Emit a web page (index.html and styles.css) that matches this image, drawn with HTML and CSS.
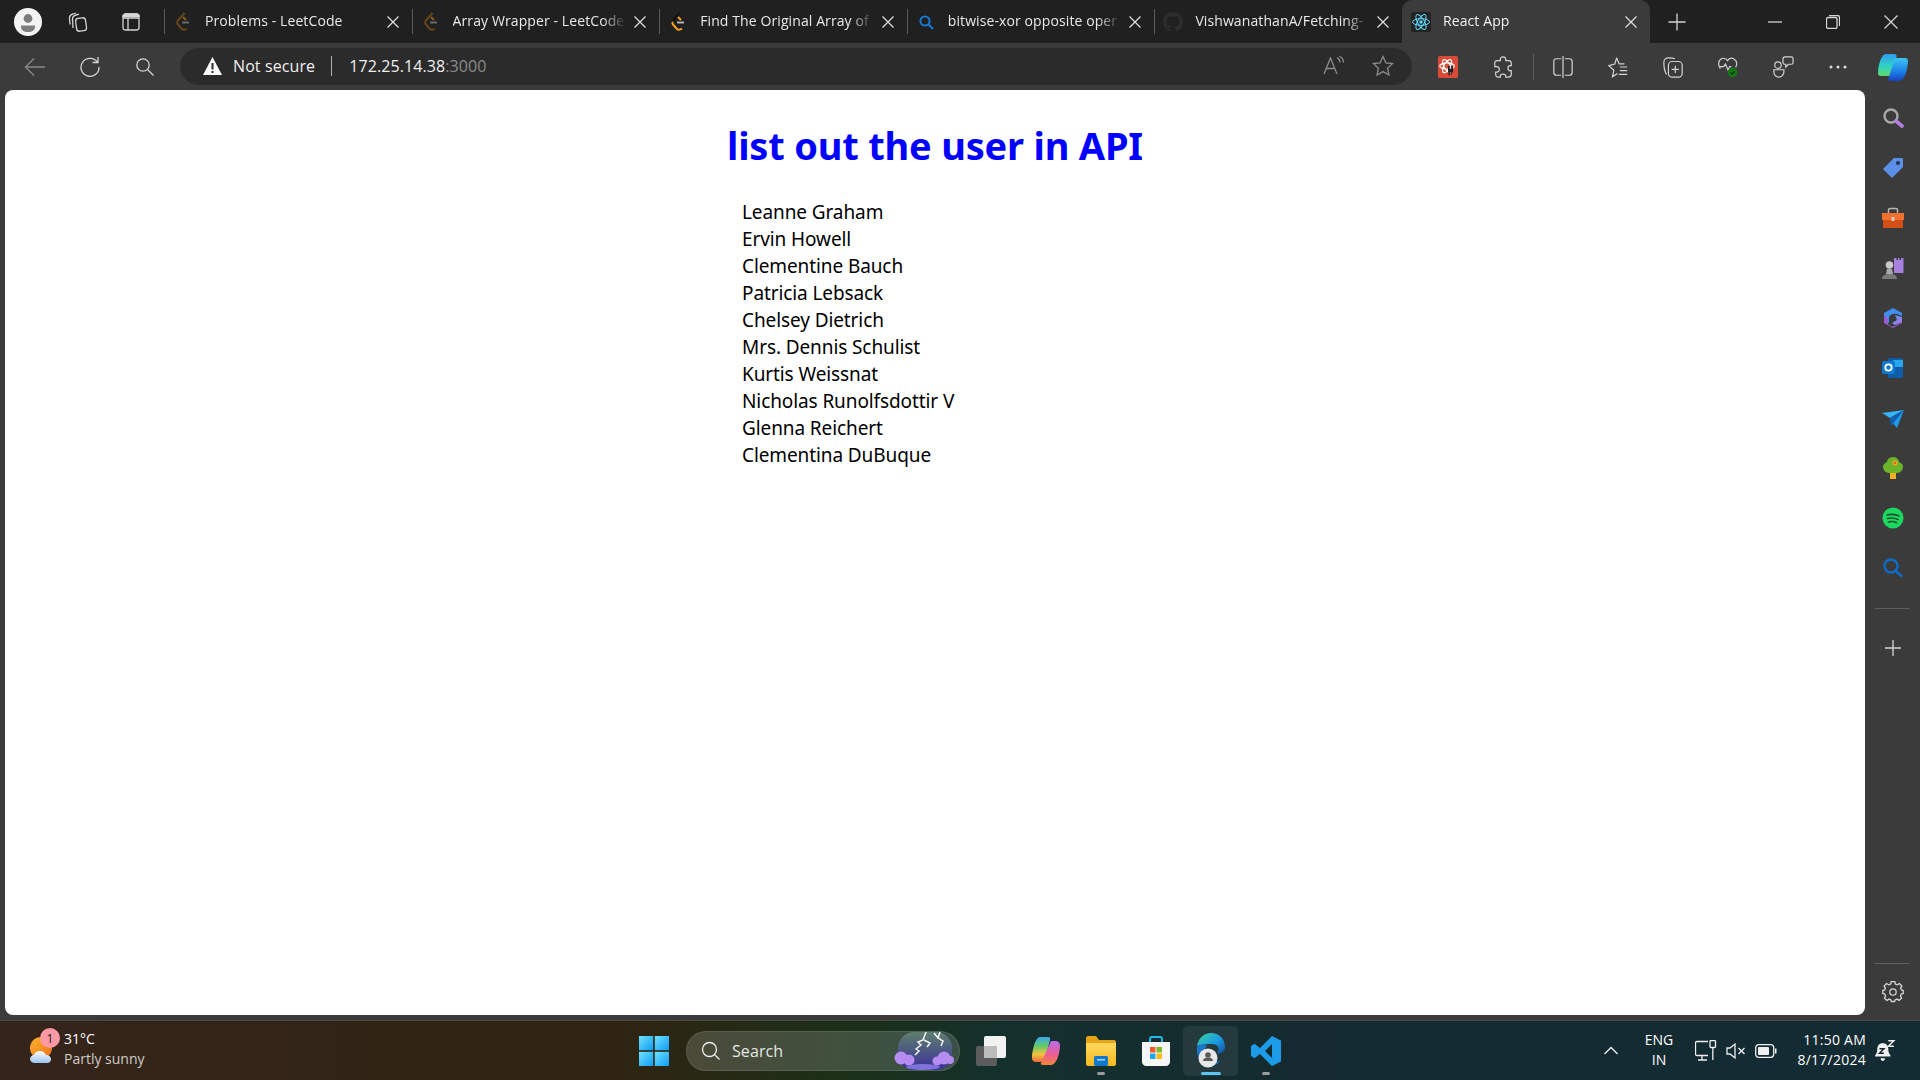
FILE: index.html
```html
<!DOCTYPE html>
<html lang="en">
<head>
    <meta charset="UTF-8">
    <title>React App</title>
    <link rel="stylesheet" href="styles.css">
</head>
<body>
<div class="window">
    <svg class="defs" width="0" height="0">
        <defs>
            <linearGradient id="copilotA" x1="0" y1="0" x2="0" y2="1"><stop offset="0" stop-color="#2f9bf0"/><stop offset=".55" stop-color="#2ed3c4"/><stop offset="1" stop-color="#5fd66a"/></linearGradient>
            <linearGradient id="copilotB" x1="0" y1="0" x2="0" y2="1"><stop offset="0" stop-color="#3cc4f5"/><stop offset=".6" stop-color="#1d7fe6"/><stop offset="1" stop-color="#1a3fc4"/></linearGradient>
            <linearGradient id="copilotC" x1="0" y1="0" x2="0" y2="1"><stop offset="0" stop-color="#3fa5f0"/><stop offset=".35" stop-color="#5ecb6b"/><stop offset=".7" stop-color="#f2c23c"/><stop offset="1" stop-color="#ee6a3c"/></linearGradient>
            <linearGradient id="copilotD" x1="0" y1="0" x2="0" y2="1"><stop offset="0" stop-color="#b56bea"/><stop offset=".6" stop-color="#ef5f8f"/><stop offset="1" stop-color="#f08838"/></linearGradient>
            <linearGradient id="winBlue" x1="0" y1="0" x2="1" y2="1"><stop offset="0" stop-color="#6fe2ff"/><stop offset="1" stop-color="#0f9cf5"/></linearGradient>
            <linearGradient id="edgeGrad" x1="0" y1="0" x2="1" y2="1"><stop offset="0" stop-color="#3bd0a0"/><stop offset=".55" stop-color="#1b9de2"/><stop offset="1" stop-color="#134a9c"/></linearGradient>
            <linearGradient id="sunGrad" x1="0" y1="0" x2="1" y2="1"><stop offset="0" stop-color="#fbb62c"/><stop offset="1" stop-color="#ef6c1c"/></linearGradient>
            <linearGradient id="cloudGrad" x1="0" y1="0" x2="0" y2="1"><stop offset="0" stop-color="#ffffff"/><stop offset="1" stop-color="#9cc4f2"/></linearGradient>
            <linearGradient id="stormGrad" x1="0" y1="0" x2="0" y2="1"><stop offset="0" stop-color="#5d7f6c"/><stop offset="1" stop-color="#3a2f9c"/></linearGradient>
            <linearGradient id="folderGrad" x1="0" y1="0" x2="0" y2="1"><stop offset="0" stop-color="#ffd75e"/><stop offset="1" stop-color="#f5b921"/></linearGradient>
            <linearGradient id="sideCopilot" x1="0" y1="0" x2="1" y2="1"><stop offset="0" stop-color="#3f8ff0"/><stop offset="1" stop-color="#c07ae8"/></linearGradient>
        </defs>
    </svg>

    <header class="tabstrip">
        <span class="avatar-slot">
            <svg class="icon-28" viewBox="0 0 28 28"><circle cx="14" cy="14" r="14" fill="#f4f4f4"/><circle cx="14" cy="10.5" r="4.4" fill="#7d7d7d"/><path d="M7 17.5h14v1.5c0 3-3 5-7 5s-7-2-7-5z" fill="#7d7d7d"/></svg>
        </span>
        <span class="strip-btn">
            <svg class="icon-20 line" viewBox="0 0 20 20"><rect x="8" y="6" width="10" height="13" rx="3" transform="rotate(-8 13 12)"/><path d="M5 16 4.500 7c0-2 1.500-3.500 3.500-4l3-.8M2 12.500 1.500 6C1.500 4 3 2.500 5 2l3-1"/></svg>
        </span>
        <span class="strip-btn strip-btn-gap">
            <svg class="icon-20 line" viewBox="0 0 20 20"><rect x="2" y="2" width="16" height="16" rx="2.500"/><path d="M2 6h16M7 6v12"/><path d="M2 4.500h16v-1l-2-1.500H4L2 3.500z" fill="#d8d8d8"/></svg>
        </span>

        <div class="tabs">
            <div class="tab tab-dim">
                <svg class="favicon" viewBox="0 0 16 20"><path d="M9.500 1 3 8.500c-1.200 1.500-1.200 2.500 0 4l3.500 4c1.500 1.500 3.500 1.500 5.500 0" class="lc-a"/><path d="M8 5l3 3" class="lc-b"/><path d="M7 10.500h7" class="lc-c"/></svg>
                <span class="tab-title">Problems - LeetCode</span>
                <svg class="tab-close" viewBox="0 0 12 12"><path d="M.5.500l11 11M11.500.500l-11 11"/></svg>
            </div>
            <div class="tab tab-dim">
                <svg class="favicon" viewBox="0 0 16 20"><path d="M9.500 1 3 8.500c-1.200 1.500-1.200 2.500 0 4l3.500 4c1.500 1.500 3.500 1.500 5.500 0" class="lc-a"/><path d="M8 5l3 3" class="lc-b"/><path d="M7 10.500h7" class="lc-c"/></svg>
                <span class="tab-title">Array Wrapper - LeetCode</span>
                <svg class="tab-close" viewBox="0 0 12 12"><path d="M.5.500l11 11M11.500.500l-11 11"/></svg>
            </div>
            <div class="tab">
                <svg class="favicon" viewBox="0 0 16 20"><path d="M9.500 1 3 8.500" stroke="#111" stroke-width="2" fill="none"/><path d="M3 10c-1 1-.5 2 0 2.500l3.500 4c1.500 1.500 3.500 1.500 5.500 0" class="lc-a lc-orange"/><path d="M8 5l3 3" class="lc-b"/><path d="M7 10.500h7" class="lc-c"/></svg>
                <span class="tab-title">Find The Original Array of</span>
                <svg class="tab-close" viewBox="0 0 12 12"><path d="M.5.500l11 11M11.500.500l-11 11"/></svg>
            </div>
            <div class="tab">
                <svg class="favicon" viewBox="0 0 16 16"><circle cx="7" cy="7" r="4.600" fill="none" stroke="#1478d4" stroke-width="2"/><path d="M10.500 10.500 15 15" stroke="#1478d4" stroke-width="2"/></svg>
                <span class="tab-title">bitwise-xor opposite oper</span>
                <svg class="tab-close" viewBox="0 0 12 12"><path d="M.5.500l11 11M11.500.500l-11 11"/></svg>
            </div>
            <div class="tab">
                <svg class="favicon favicon-gh" viewBox="0 0 16 16"><path fill="#2e2e2e" d="M8 0C3.580 0 0 3.580 0 8c0 3.540 2.290 6.530 5.470 7.590.4.070.55-.17.55-.38 0-.19-.01-.82-.01-1.490-2.010.37-2.530-.49-2.690-.94-.09-.23-.48-.94-.82-1.130-.28-.15-.68-.52-.01-.53.63-.01 1.080.58 1.230.82.72 1.210 1.870.87 2.330.66.070-.52.28-.87.51-1.070-1.780-.2-3.640-.89-3.640-3.950 0-.87.31-1.590.82-2.150-.08-.2-.36-1.020.08-2.120 0 0 .67-.21 2.200.82.64-.18 1.320-.27 2-.27.68 0 1.360.09 2 .27 1.530-1.040 2.200-.82 2.200-.82.44 1.100.16 1.920.08 2.120.51.56.82 1.270.82 2.150 0 3.070-1.870 3.750-3.650 3.950.29.25.54.73.54 1.480 0 1.070-.01 1.930-.01 2.200 0 .21.15.46.55.38A8.010 8.010 0 0 0 16 8c0-4.420-3.580-8-8-8z"/></svg>
                <span class="tab-title">VishwanathanA/Fetching-</span>
                <svg class="tab-close" viewBox="0 0 12 12"><path d="M.5.500l11 11M11.500.500l-11 11"/></svg>
            </div>
            <div class="tab tab-active">
                <svg class="favicon favicon-react" viewBox="0 0 20 20"><rect width="20" height="20" rx="2" fill="#232323"/><g fill="none" stroke="#61dafb" stroke-width="1"><ellipse cx="10" cy="10" rx="8.500" ry="3.300"/><ellipse cx="10" cy="10" rx="8.500" ry="3.300" transform="rotate(60 10 10)"/><ellipse cx="10" cy="10" rx="8.500" ry="3.300" transform="rotate(120 10 10)"/></g><circle cx="10" cy="10" r="1.700" fill="#61dafb"/></svg>
                <span class="tab-title">React App</span>
                <svg class="tab-close" viewBox="0 0 12 12"><path d="M.5.500l11 11M11.500.500l-11 11"/></svg>
            </div>
        </div>

        <span class="new-tab">
            <svg class="icon-20 line" viewBox="0 0 20 20"><path d="M10 1.500v17M1.500 10h17"/></svg>
        </span>

        <div class="win-controls">
            <span class="win-btn"><svg class="icon-14 line" viewBox="0 0 14 14"><path d="M0 7h14"/></svg></span>
            <span class="win-btn"><svg class="icon-14 line" viewBox="0 0 14 14"><rect x=".5" y="2.500" width="10.500" height="11" rx="1.500"/><path d="M3 .5h8.500c1 0 2 1 2 2V11"/></svg></span>
            <span class="win-btn"><svg class="icon-14 line" viewBox="0 0 14 14"><path d="M.5.500l13 13M13.500.500l-13 13"/></svg></span>
        </div>
    </header>

    <nav class="toolbar">
        <span class="tool tool-off"><svg class="icon-22 line" viewBox="0 0 22 22"><path d="M21 11H1.500M10 2.500 1.500 11l8.500 8.500"/></svg></span>
        <span class="tool tool-reload"><svg class="icon-22 line" viewBox="0 0 22 22"><path d="M18.600 6.500A9 9 0 1 0 20 11M19 1v5.500h-5.500"/></svg></span>
        <span class="tool"><svg class="icon-20 line" viewBox="0 0 20 20"><circle cx="8" cy="8" r="6.200"/><path d="m12.500 12.500 6 6"/></svg></span>

        <div class="address">
            <svg class="warn" viewBox="0 0 20 20"><path d="M10 1 19.500 19H.5z" fill="#fff"/><path d="M9 7h2v6.500H9zM9 15h2v2H9z" fill="#2b2b2b"/></svg>
            <span class="not-secure">Not secure</span>
            <span class="addr-sep"></span>
            <span class="url">172.25.14.38<span class="port">:3000</span></span>
            <div class="addr-tools">
                <span class="addr-tool"><svg class="icon-22 line line-dim" viewBox="0 0 22 22"><path d="M1 19 7.500 3 14 19M3.500 13.500h8"/><path d="M14 2.500c2 1.200 3 2.700 3 5M16.500 1c2.500 1.500 4 3.500 4 6.500"/></svg></span>
                <span class="addr-tool"><svg class="icon-22 line line-dim" viewBox="0 0 22 22"><path d="m11 1.500 2.900 6.300 6.600.8-4.900 4.600 1.300 6.800L11 16.600 5.100 20l1.300-6.800-4.900-4.600 6.600-.8z"/></svg></span>
            </div>
        </div>

        <span class="tool">
            <svg class="icon-22" viewBox="0 0 22 24"><rect width="22" height="24" rx="2" fill="#d84b38"/><g fill="none" stroke="#fff" stroke-width="1.300"><ellipse cx="10" cy="11" rx="8" ry="3.400"/><ellipse cx="10" cy="11" rx="8" ry="3.400" transform="rotate(60 10 11)"/><ellipse cx="10" cy="11" rx="8" ry="3.400" transform="rotate(120 10 11)"/></g><path d="M11 11h2v3h1.500v-3h2v7h-1.500v3H14v-3h-1v3h-1.500v-3H11z" fill="#222"/></svg>
        </span>
        <span class="tool">
            <svg class="icon-22 line" viewBox="0 0 22 24"><path d="M8 4c0-4 6-4 6 0v1h3c2 0 3 1 3 3v2.500h-1c-3.500 0-3.500 5.500 0 5.500h1V20c0 2-1 3-3 3h-3v-1c0-3-6-3-6 0v1H6c-2 0-3-1-3-3v-2.500h1c2.500 0 3-1.500 3-3s-1-3-3-3H2V8c0-2 1-3 3-3h3z"/></svg>
        </span>
        <span class="tool-sep"></span>
        <span class="tool">
            <svg class="icon-22 line" viewBox="0 0 22 24"><path d="M11 0v24M9 3H4C2 3 1 4 1 6v12c0 2 1 3 3 3h5M13 3h5c2 0 3 1 3 3v12c0 2-1 3-3 3h-5"/></svg>
        </span>
        <span class="tool">
            <svg class="icon-22 line" viewBox="0 0 22 24"><path d="m9.500 2 2.700 6.500H18M10.500 19l-5.500 3.500 1.500-7L1 10.500l6.500-1.800L9.500 2M13 12h8M13 16h8M12 20h9"/></svg>
        </span>
        <span class="tool">
            <svg class="icon-22 line" viewBox="0 0 22 24"><path d="M4 20C2 17 1 12 1 7c0-3 2-5 5-5 2 0 5 0 7 1"/><rect x="6" y="6" width="15" height="17" rx="4"/><path d="M13.500 10.500v8M9.500 14.500h8"/></svg>
        </span>
        <span class="tool">
            <svg class="icon-22" viewBox="0 0 24 26"><path class="stroke-only" d="M3 15C0 11 0 5 5 3c3-1 5 0 6.500 2.500C13 3 16 2 19 3.500c4 2 4 7 2 10M2 12.500h5l2-3 3 7 2-4h2"/><circle cx="17.500" cy="19.500" r="5.500" fill="#107c10"/><path d="m15 19.500 2 2 3-3.500" fill="none" stroke="#111" stroke-width="1.200"/></svg>
        </span>
        <span class="tool">
            <svg class="icon-22 line" viewBox="0 0 22 24"><circle cx="5.500" cy="10" r="3.500"/><path d="M1 15h11v2c0 3.500-2.500 6-5.500 6S1 20.500 1 17z"/><path d="M11 3c0-1 1-2 2-2h7c1 0 2 1 2 2v4c0 1-1 2-2 2h-3l-3 3V9h-1c-1 0-2-1-2-2z"/></svg>
        </span>
        <span class="tool">
            <svg class="icon-20" viewBox="0 0 20 6"><circle cx="3" cy="3" r="1.500" fill="#e0e0e0"/><circle cx="10" cy="3" r="1.500" fill="#e0e0e0"/><circle cx="17" cy="3" r="1.500" fill="#e0e0e0"/></svg>
        </span>
        <span class="tool">
            <svg class="icon-32" viewBox="0 0 32 32"><path d="M9 3h8c2 0 3 1 2.500 3L15 22c-.5 2-2 3-4 3H4c-2 0-3.200-1-3-3C1 15 4 3 9 3z" fill="url(#copilotA)"/><path d="M20 7h8c2 0 3 1 3 3 0 7-3 20-9 20h-8c-2 0-2.800-1-2.500-3L17 10c.5-2 1.500-3 3-3z" fill="url(#copilotB)"/></svg>
        </span>
    </nav>

    <div class="workspace">
        <main class="page">
            <div class="content">
                <h1>list out the user in API</h1>
                <ul class="users">
                    <li>Leanne Graham</li>
                    <li>Ervin Howell</li>
                    <li>Clementine Bauch</li>
                    <li>Patricia Lebsack</li>
                    <li>Chelsey Dietrich</li>
                    <li>Mrs. Dennis Schulist</li>
                    <li>Kurtis Weissnat</li>
                    <li>Nicholas Runolfsdottir V</li>
                    <li>Glenna Reichert</li>
                    <li>Clementina DuBuque</li>
                </ul>
            </div>
        </main>

        <aside class="sidebar">
            <span class="side-btn"><svg class="icon-22" viewBox="0 0 22 22"><circle cx="9" cy="9" r="6.500" fill="none" stroke="#a8a8a8" stroke-width="2.400"/><path d="m14 14 6 5" stroke="#b57be0" stroke-width="3.600" stroke-linecap="round"/></svg></span>
            <span class="side-btn"><svg class="icon-22" viewBox="0 0 22 22"><path d="M12 1h8c.6 0 1 .4 1 1v8L10 21 1 12z" fill="#5b8fe8"/><circle cx="16" cy="6" r="2" fill="#23304a"/></svg></span>
            <span class="side-btn"><svg class="icon-22" viewBox="0 0 22 22"><path d="M6.500 6V3c0-1 1-1.500 1.500-1.500h6c.5 0 1.500.5 1.500 1.500v3" fill="none" stroke="#b5b5b5" stroke-width="1.500"/><rect y="6" width="22" height="7" fill="#f0702c"/><rect x="1" y="13" width="20" height="8" fill="#d34f18"/><rect x="9.500" y="10" width="3" height="4" fill="#d9c6b8"/></svg></span>
            <span class="side-btn"><svg class="icon-22" viewBox="0 0 22 22"><path d="M12 1h2.500v2H16V1h1.500v2H19V1h2.500v15H12z" fill="#a97fe0"/><circle cx="7.500" cy="8" r="3.800" fill="#c9c9c9"/><path d="M5 12h5l1 5H4z" fill="#a8a8a8"/><path d="M0 22c0-3 2-5 7.500-5S15 19 15 22z" fill="#7a7a7a"/></svg></span>
            <span class="side-btn"><svg class="icon-22" viewBox="0 0 22 22"><path d="M11 1 20 6v3l-5-2c-3-1-7 0-8 3v6l-5-3V6z" fill="#3f8ff0"/><path d="M2 8l4 3v5c0 3 4 4 7 3l7-4v1l-9 5-9-5z" fill="#9a5bd6"/><path d="M13 8l7 2v5l-7 3-3-2 5-3z" fill="url(#sideCopilot)"/></svg></span>
            <span class="side-btn"><svg class="icon-22" viewBox="0 0 22 22"><rect x="6" y="1" width="15" height="20" rx="1.500" fill="#0f5da8"/><rect x="11" y="3" width="10" height="7" fill="#28a8ea"/><rect x="0" y="4" width="13" height="13" rx="1.500" fill="#0f78d4"/><circle cx="6.500" cy="10.500" r="3.200" fill="none" stroke="#fff" stroke-width="1.800"/></svg></span>
            <span class="side-btn"><svg class="icon-22" viewBox="0 0 22 22"><path d="M0 6 22 3 8 11z" fill="#34b4f4"/><path d="M22 3 15 21 8 13z" fill="#1d9be6"/><path d="M8 11 22 3 9 19z" fill="#0e5fb5"/></svg></span>
            <span class="side-btn"><svg class="icon-22" viewBox="0 0 22 22"><rect x="8" y="15" width="6" height="7" fill="#f2b01e"/><path d="M11 0c4 0 6 3 6 5 3 1 4 3 4 5 0 3-3 6-6 6H7c-3 0-6-3-6-6 0-2 1-4 4-5 0-2 2-5 6-5z" fill="#6db32a"/><circle cx="13" cy="6" r="2.500" fill="#f0a91e"/><circle cx="13" cy="6" r="1" fill="#e0412a"/></svg></span>
            <span class="side-btn"><svg class="icon-22" viewBox="0 0 22 22"><circle cx="11" cy="11" r="10.500" fill="#1ed760"/><path d="M5 8c4-1 8-1 12 1M5.500 11.500c3.500-1 7-.7 10.500 1M6.500 15c2.500-.7 5.500-.5 8 .7" fill="none" stroke="#14532d" stroke-width="1.600" stroke-linecap="round"/></svg></span>
            <span class="side-btn"><svg class="icon-22" viewBox="0 0 22 22"><circle cx="9" cy="9" r="6.500" fill="none" stroke="#0f6cc9" stroke-width="2.400"/><path d="m14 14 6 5.500" stroke="#0f6cc9" stroke-width="2.400"/></svg></span>
            <span class="side-rule"></span>
            <span class="side-btn side-btn-plus"><svg class="icon-16 line" viewBox="0 0 16 16"><path d="M8 0v16M0 8h16"/></svg></span>
            <span class="side-rule side-rule-low"></span>
            <span class="side-btn"><svg class="icon-22 line" viewBox="0 0 22 22"><circle cx="11" cy="11" r="3.200"/><path d="M12.800 1.500h-3.600L8.700 4 6.800 4.800 4.600 3.500 2.100 6l1.300 2.100L2.600 10 .8 10.500v3l2 .5.800 1.900-1.200 2.200 2.500 2.300 2.100-1.300 1.900.8.500 1.600h3.200l.5-1.600 1.900-.8 2.100 1.300 2.500-2.300-1.200-2.200.8-1.900 2-.5v-3L19.400 10l-.8-1.900 1.300-2.100-2.500-2.500-2.200 1.300-1.900-.8z" transform="translate(0 -1)"/></svg></span>
        </aside>
    </div>

    <footer class="taskbar">
        <div class="weather">
            <div class="weather-icon">
                <svg class="icon-28" viewBox="0 0 28 28"><circle cx="13" cy="11" r="11" fill="url(#sunGrad)"/><path d="M5 26c-3 0-5-2-5-4s2-4 4-4c1-3 3-4 6-4 3 0 5 2 6 4 3 0 5 2 5 4 0 3-2 4-4 4z" transform="translate(2 0)" fill="url(#cloudGrad)"/></svg>
                <span class="weather-badge">1</span>
            </div>
            <div class="weather-text">
                <span class="weather-temp">31°C</span>
                <span class="weather-desc">Partly sunny</span>
            </div>
        </div>

        <div class="task-center">
            <span class="task-start">
                <svg class="icon-30" viewBox="0 0 30 30"><rect width="14.200" height="14.200" fill="url(#winBlue)"/><rect x="15.800" width="14.200" height="14.200" fill="url(#winBlue)"/><rect y="15.800" width="14.200" height="14.200" fill="url(#winBlue)"/><rect x="15.800" y="15.800" width="14.200" height="14.200" fill="url(#winBlue)"/></svg>
            </span>
            <div class="task-search">
                <svg class="icon-20 line line-bright" viewBox="0 0 20 20"><circle cx="8.500" cy="8.500" r="7"/><path d="m13.500 13.500 5 5"/></svg>
                <span class="task-search-text">Search</span>
                <svg class="storm" viewBox="0 0 61 38"><rect x="4" width="54" height="38" rx="16" fill="url(#stormGrad)"/><path d="M32 0l-3 8-5 2 3 3-5 4 3 2-4 4M30 8l6 3-3 4M46 0l-2 6 5 3-2 5M40 1l4 5" fill="none" stroke="#f4f4f4" stroke-width="1.500"/><g fill="#b68cf0"><circle cx="7" cy="26" r="6.500"/><circle cx="15" cy="28" r="5.500"/><circle cx="50" cy="26" r="6.500"/><circle cx="43" cy="29" r="4.500"/><circle cx="56" cy="28" r="4"/></g><ellipse cx="29" cy="35" rx="17" ry="3" fill="#7f72d8"/></svg>
            </div>
            <span class="task-app">
                <svg class="icon-30" viewBox="0 0 30 30"><rect y="10" width="21" height="20" rx="2" fill="#5c5c5c"/><rect x="8" width="22" height="22" rx="2" fill="#f2f2f2"/><rect x="8" y="10" width="13" height="12" fill="#bcbcbc"/></svg>
            </span>
            <span class="task-app">
                <svg class="icon-30" viewBox="0 0 30 30"><path d="M9 1h8c2 0 2.500 1 2 3l-5 19c-.5 2-2 3-4 3H5c-3 0-4-2-4-4 0-6 3-21 8-21z" fill="url(#copilotC)"/><path d="M20 5h5c2 0 4 2 4 4 0 7-3 20-9 20h-8c-2 0-2.500-1-2-2z" fill="url(#copilotD)"/></svg>
            </span>
            <span class="task-app task-app-open">
                <svg class="icon-30" viewBox="0 0 30 30"><path d="M0 2c0-1 1-2 2-2h8l3 4h15c1 0 2 1 2 2v3H0z" fill="#e5a516"/><path d="M0 7h30v21c0 1-1 2-2 2H2c-1 0-2-1-2-2z" fill="url(#folderGrad)"/><rect x="8" y="20" width="14" height="10" rx="1.500" fill="#1478c8"/><rect x="11" y="23" width="8" height="1.500" fill="#9ed4ff"/></svg>
            </span>
            <span class="task-app">
                <svg class="icon-30" viewBox="0 0 30 30"><path d="M9 6V3c0-1 1-2 2-2h8c1 0 2 1 2 2v3" fill="none" stroke="#22b8e8" stroke-width="2"/><path d="M1 6h28v20c0 2-2 4-4 4H5c-2 0-4-2-4-4z" fill="#f6f6f6"/><rect x="9" y="11" width="5.500" height="5.500" fill="#ef5b2a"/><rect x="15.500" y="11" width="5.500" height="5.500" fill="#7fba2a"/><rect x="9" y="17.500" width="5.500" height="5.500" fill="#1ea6f0"/><rect x="15.500" y="17.500" width="5.500" height="5.500" fill="#fbbb18"/></svg>
            </span>
            <span class="task-app task-app-active">
                <svg class="icon-34" viewBox="0 0 34 36"><path d="M3 14C4 5 10 0 17 0c8 0 14 6 14 14 0 5-4 7-8 6 3-3 2-9-5-9C11 11 3 12 3 14z" fill="url(#edgeGrad)"/><path d="M3 14c2-3 7-3 10-1-3 3-3 9 1 13 3 3 8 4 12 2-3 4-7 6-11 5C7 32 2 23 3 14z" fill="#1b74c8"/><circle cx="14" cy="25" r="9.500" fill="#e8e8e8"/><circle cx="14" cy="22" r="2.800" fill="#5a5a5a"/><path d="M9 28c0-2.500 2-3.500 5-3.500s5 1 5 3.500z" fill="#5a5a5a"/></svg>
            </span>
            <span class="task-app task-app-open">
                <svg class="icon-30" viewBox="0 0 30 30"><path d="M21 0 30 4.500V25.500L21 30 9 18l-5.500 4.300L0 20V10l3.500-2.300L9 12zM21 8l-7 7 7 7z" fill="#1c9ce8" fill-rule="evenodd"/></svg>
            </span>
        </div>

        <div class="tray">
            <span class="tray-chevron"><svg class="icon-16 line line-bright" viewBox="0 0 16 16"><path d="m1.500 11 6.500-6.500 6.500 6.500"/></svg></span>
            <span class="tray-lang">ENG<br>IN</span>
            <span class="tray-net"><svg class="icon-22 line line-bright" viewBox="0 0 22 22"><path d="M13 15.500H2c-1 0-1.500-.5-1.500-1.500V3c0-1 .5-1.500 1.500-1.500h11M7 15.500v4M3 20h9"/><rect x="15" y=".5" width="5.500" height="7" rx="1"/><path d="M17.800 7.500V20"/></svg></span>
            <span class="tray-sound"><svg class="icon-20 line line-bright" viewBox="0 0 20 20"><path d="M1 7v6h3l5 4V3L4 7zM12.500 7l6 6M18.500 7l-6 6"/></svg></span>
            <span class="tray-batt"><svg class="icon-22" viewBox="0 0 22 14"><rect x=".7" y=".7" width="18" height="12.600" rx="3" fill="none" stroke="#f0f0f0" stroke-width="1.300"/><rect x="3" y="3" width="11" height="8" rx="1" fill="#f0f0f0"/><rect x="20" y="4.500" width="1.500" height="5" fill="#f0f0f0"/></svg></span>
            <span class="tray-clock">11:50 AM<br>8/17/2024</span>
            <span class="tray-bell"><svg class="icon-22" viewBox="0 0 20 20"><path d="M8 3c3.500 0 5 2.500 5 5.500 0 3 1 4.500 2 5.500v1H1v-1c1-1 2-2.500 2-5.500C3 5.500 4.500 3 8 3zM6 16.500h4c0 1.500-1 2.500-2 2.500s-2-1-2-2.500z" fill="#f0f0f0"/><path d="M5 8h4l-4 4h4" fill="none" stroke="#14292f" stroke-width="1.300"/><path d="M13 .7h5l-5 5h5" fill="none" stroke="#f0f0f0" stroke-width="1.300"/></svg></span>
        </div>
    </footer>
</div>
</body>
</html>
```

FILE: styles.css
```css
* {
    box-sizing: border-box;
}
html, body {
    margin: 0;
    height: 100%;
    overflow: hidden;
}
body {
    font-family: "Open Sans", "Noto Sans", sans-serif;
    background-color: #3b3b3b;
}
svg {
    display: block;
    flex: none;
}
.defs {
    position: absolute;
}
.window {
    width: 1920px;
    height: 1080px;
    display: flex;
    flex-direction: column;
}

/* icon sizes */
.icon-14 { width: 14px; height: 14px; }
.icon-16 { width: 16px; height: 16px; }
.icon-20 { width: 20px; height: 20px; }
.icon-22 { width: 22px; height: 22px; }
.icon-28 { width: 28px; height: 28px; }
.icon-30 { width: 30px; height: 30px; }
.icon-32 { width: 32px; height: 32px; }
.icon-34 { width: 34px; height: 36px; }
.line {
    fill: none;
    stroke: #d4d4d4;
    stroke-width: 1.3;
}
.line-dim { stroke: #8c8c8c; }
.line-bright { stroke: #f0f0f0; }
.stroke-only {
    fill: none;
    stroke: #d4d4d4;
    stroke-width: 1.400;
}

/* tab strip */
.tabstrip {
    height: 43px;
    flex: none;
    display: flex;
    align-items: center;
    background-color: #202020;
}
.avatar-slot {
    width: 55px;
    display: flex;
    justify-content: center;
}
.strip-btn {
    width: 45px;
    display: flex;
    justify-content: center;
}
.strip-btn-gap {
    margin-left: 8px;
}
.tabs {
    display: flex;
    height: 43px;
    margin-left: 11px;
}
.tab {
    position: relative;
    width: 247.6px;
    display: flex;
    align-items: center;
    padding: 0 11px 0 11px;
    color: #e8e8e8;
    font-size: 14px;
}
.tab::before {
    content: "";
    position: absolute;
    left: 0;
    top: 9px;
    bottom: 9px;
    width: 1px;
    background: #5c5c5c;
}
.tab-active {
    background-color: #3b3b3b;
    border-radius: 10px 10px 0 0;
    color: #f2f2f2;
}
.tab-active::before {
    display: none;
}
.favicon {
    width: 16px;
    height: 20px;
}
.favicon-gh,
.favicon-react {
    width: 20px;
    height: 20px;
    margin-left: -2px;
    margin-right: -2px;
}
.tab-dim .favicon {
    opacity: 0.5;
}
.lc-a {
    fill: none;
    stroke: #2a2a2a;
    stroke-width: 2;
}
.tab-dim .lc-a {
    stroke: #a86d16;
}
.lc-orange {
    stroke: #f89f1b;
}
.lc-b {
    fill: none;
    stroke: #f89f1b;
    stroke-width: 2;
}
.lc-c {
    fill: none;
    stroke: #b3b3b3;
    stroke-width: 2;
}
.tab-title {
    flex: 1;
    margin-left: 14px;
    padding-bottom: 2px;
    letter-spacing: 0.1px;
    white-space: nowrap;
    overflow: hidden;
    -webkit-mask-image: linear-gradient(to left, transparent 0, #000 24px);
    mask-image: linear-gradient(to left, transparent 0, #000 24px);
}
.tab-close {
    width: 12px;
    height: 12px;
    margin: 0 2px 0 8px;
    fill: none;
    stroke: #e0e0e0;
    stroke-width: 1.2;
}
.new-tab {
    width: 40px;
    margin-left: 7px;
    display: flex;
    justify-content: center;
}
.win-controls {
    margin-left: auto;
    display: flex;
}
.win-btn {
    width: 58px;
    display: flex;
    justify-content: center;
}

/* toolbar */
.toolbar {
    height: 47px;
    flex: none;
    display: flex;
    align-items: center;
    padding-left: 7px;
    background-color: #3b3b3b;
}
.tool {
    width: 55px;
    display: flex;
    justify-content: center;
    flex: none;
}
.tool-off svg {
    opacity: 0.5;
}
.tool-sep {
    width: 1px;
    height: 26px;
    margin: 0 1px 0 3px;
    background: #5c5c5c;
}
.address {
    width: 1237px;
    height: 37px;
    margin: 0 8px 0 8px;
    padding: 0 5px 1px 22px;
    display: flex;
    align-items: center;
    border-radius: 19px;
    background-color: #2b2b2b;
    font-size: 16px;
    letter-spacing: 0.1px;
    color: #f0f0f0;
}
.warn {
    width: 21px;
    height: 20px;
}
.not-secure {
    margin-left: 10px;
}
.addr-sep {
    width: 1px;
    height: 20px;
    margin: 0 17px 0 16px;
    background: #b0b0b0;
}
.url {
    color: #f0f0f0;
}
.port {
    color: #8c8c8c;
}
.addr-tools {
    margin-left: auto;
    display: flex;
}
.addr-tool {
    width: 49px;
    display: flex;
    justify-content: center;
}

/* page */
.workspace {
    flex: 1;
    display: flex;
    min-height: 0;
    padding-left: 5px;
}
.page {
    width: 1860px;
    height: 925px;
    background: #fff;
    border-radius: 8px;
}
.content {
    width: 466px;
    margin: 0 auto;
    padding-top: 28px;
    color: #000;
    font-family: "Noto Sans", sans-serif;
}
h1 {
    margin: 0;
    text-align: center;
    color: #0000ff;
    font-size: 38px;
    letter-spacing: -0.2px;
    line-height: 55px;
}
.users {
    margin: 26px 0 0;
    padding: 0 0 0 40px;
    list-style: none;
    font-size: 19px;
    letter-spacing: -0.1px;
    line-height: 27px;
}
.sidebar {
    flex: 1;
    display: flex;
    flex-direction: column;
    align-items: center;
    padding-top: 3px;
    padding-bottom: 3px;
}
.side-btn {
    height: 50px;
    display: flex;
    align-items: center;
    justify-content: center;
    flex: none;
}
.side-rule {
    width: 35px;
    height: 1px;
    margin-top: 15px;
    background: #5e5e5e;
    flex: none;
}
.side-btn-plus {
    margin-top: 14px;
}
.side-rule-low {
    margin-top: auto;
    margin-bottom: 3px;
}

/* taskbar */
.taskbar {
    height: 60px;
    flex: none;
    display: flex;
    align-items: center;
    border-top: 1px solid #4a4a46;
    background: linear-gradient(to right, #35241a 0, #2f2412 620px, #1b3018 850px, #14302c 1000px, #142a30 1300px, #132b33 100%);
    color: #fff;
}
.weather {
    width: 629px;
    flex: none;
    display: flex;
    align-items: center;
    padding-left: 28px;
}
.weather-icon {
    position: relative;
    width: 36px;
}
.weather-badge {
    position: absolute;
    top: -9px;
    left: 12px;
    width: 20px;
    height: 20px;
    border-radius: 50%;
    background: #ff99a4;
    color: #1c1c1c;
    font-size: 13px;
    line-height: 20px;
    text-align: center;
}
.weather-text {
    display: flex;
    flex-direction: column;
    margin-top: -3px;
    font-size: 14px;
    line-height: 20px;
}
.weather-desc {
    color: #d0ccc8;
}
.task-center {
    display: flex;
    align-items: center;
}
.task-start {
    width: 50px;
    display: flex;
    justify-content: center;
}
.task-search {
    width: 274px;
    height: 40px;
    margin-left: 7px;
    margin-right: 3px;
    padding-left: 14px;
    display: flex;
    align-items: center;
    border-radius: 20px;
    border: 1px solid rgba(255, 255, 255, 0.1);
    background: rgba(255, 255, 255, 0.16);
}
.task-search-text {
    margin-left: 11px;
    font-size: 16px;
    letter-spacing: 0.1px;
    color: #e6e6e6;
}
.storm {
    width: 61px;
    height: 38px;
    margin-left: auto;
    margin-right: 4px;
}
.task-app {
    position: relative;
    width: 55px;
    height: 50px;
    display: flex;
    align-items: center;
    justify-content: center;
    border-radius: 5px;
}
.task-app-open::after,
.task-app-active::after {
    content: "";
    position: absolute;
    bottom: 1px;
    left: 50%;
    width: 8px;
    height: 3px;
    margin-left: -4px;
    border-radius: 2px;
    background: #9a9a9a;
}
.task-app-active {
    background: rgba(255, 255, 255, 0.07);
}
.task-app-active::after {
    width: 20px;
    margin-left: -10px;
    background: #5cc4f5;
}
.tray {
    margin-left: auto;
    padding-right: 16px;
    display: flex;
    align-items: center;
    font-size: 14px;
}
.tray span {
    display: flex;
    justify-content: center;
}
.tray-chevron { width: 40px; }
.tray .tray-lang {
    display: block;
    width: 56px;
    margin-top: -2px;
    text-align: center;
    line-height: 20px;
}
.tray-net { width: 37px; }
.tray-sound { width: 24px; }
.tray-batt { width: 36px; }
.tray-batt svg { height: 14px; }
.tray .tray-clock {
    display: block;
    width: 82px;
    margin-top: -2px;
    text-align: right;
    letter-spacing: 0.25px;
    line-height: 20px;
    white-space: nowrap;
}
.tray-bell { width: 38px; }
```
